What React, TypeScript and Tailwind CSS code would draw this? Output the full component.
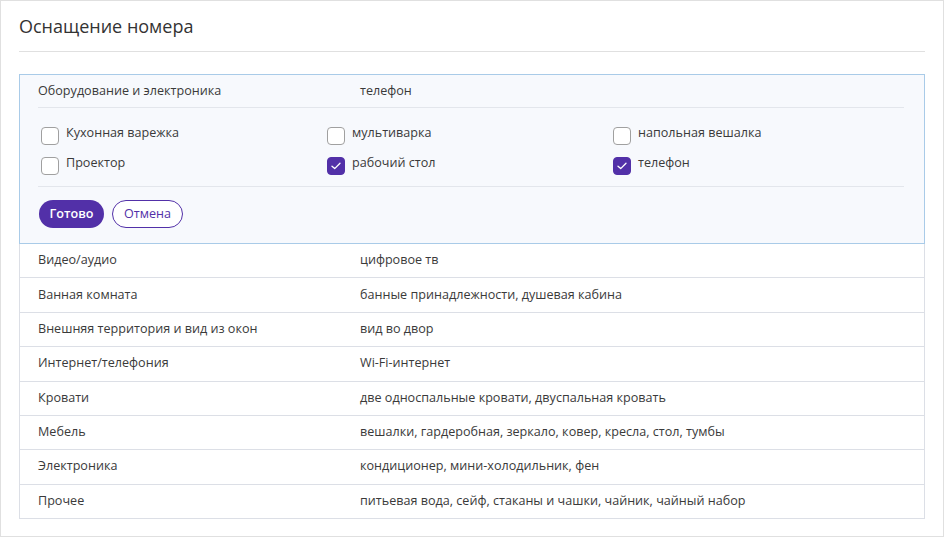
const rows: [string, string][] = [
  ["Видео/аудио", "цифровое тв"],
  ["Ванная комната", "банные принадлежности, душевая кабина"],
  ["Внешняя территория и вид из окон", "вид во двор"],
  ["Интернет/телефония", "Wi-Fi-интернет"],
  ["Кровати", "две односпальные кровати, двуспальная кровать"],
  ["Мебель", "вешалки, гардеробная, зеркало, ковер, кресла, стол, тумбы"],
  ["Электроника", "кондиционер, мини-холодильник, фен"],
  ["Прочее", "питьевая вода, сейф, стаканы и чашки, чайник, чайный набор"],
];

const options: [string, boolean][] = [
  ["Кухонная варежка", false],
  ["мультиварка", false],
  ["напольная вешалка", false],
  ["Проектор", false],
  ["рабочий стол", true],
  ["телефон", true],
];

function Checkbox({ label, checked }: { label: string; checked: boolean }) {
  return (
    <div className="flex items-start gap-[7px] h-[30px] pl-[3px]">
      <span
        className={
          checked
            ? "mt-[3px] w-[18px] h-[18px] rounded-[4px] bg-[#5230a8] border border-[#5230a8] flex items-center justify-center shrink-0"
            : "mt-[3px] w-[18px] h-[18px] rounded-[4px] bg-white border border-[#a0a0a0] shrink-0"
        }
      >
        {checked && (
          <svg width="10" height="8" viewBox="0 0 10 8" fill="none">
            <path d="M1 4.2 L3.7 6.6 L9 1.2" stroke="white" strokeWidth="1.3" strokeLinecap="round" strokeLinejoin="round" />
          </svg>
        )}
      </span>
      <span className="leading-[18px]">{label}</span>
    </div>
  );
}

export default function App() {
  return (
    <div
      className="w-[944px] h-[537px] bg-white border border-[#e0e0e0] px-[18px] text-[12.6px] text-[#3a3a3a]"
      style={{ fontFamily: '"Open Sans", "Liberation Sans", sans-serif' }}
    >
      <div className="h-[51px] border-b border-[#e0e0e0] flex items-center pt-[1px]">
        <h1 className="text-[18px] text-[#333]">Оснащение номера</h1>
      </div>

      <div className="mt-[22px] border border-[#a9cbe8] bg-[#f7f9fd] pl-[18px] pr-[20px]">
        <div className="h-[33px] flex items-center border-b border-[#e3e6ec]">
          <div className="w-[322px]">Оборудование и электроника</div>
          <div>телефон</div>
        </div>
        <div className="grid grid-cols-[286px_286px_1fr] pt-[16px] pb-[2px] border-b border-[#e3e6ec]">
          {options.map(([label, checked]) => (
            <Checkbox key={label} label={label} checked={checked} />
          ))}
        </div>
        <div className="flex gap-[8px] pt-[13px] pb-[15px] pl-[1px]">
          <button className="h-[28px] w-[65px] rounded-full bg-[#5230a8] text-white font-semibold">
            Готово
          </button>
          <button className="h-[28px] w-[71px] rounded-full bg-white border border-[#5230a8] text-[#5230a8]">
            Отмена
          </button>
        </div>
      </div>

      <div className="border-x border-[#dcdfe6]">
        {rows.map(([name, value]) => (
          <div key={name} className="h-[34.375px] flex items-center border-b border-[#dcdfe6] px-[18px]">
            <div className="w-[322px]">{name}</div>
            <div>{value}</div>
          </div>
        ))}
      </div>
    </div>
  );
}
